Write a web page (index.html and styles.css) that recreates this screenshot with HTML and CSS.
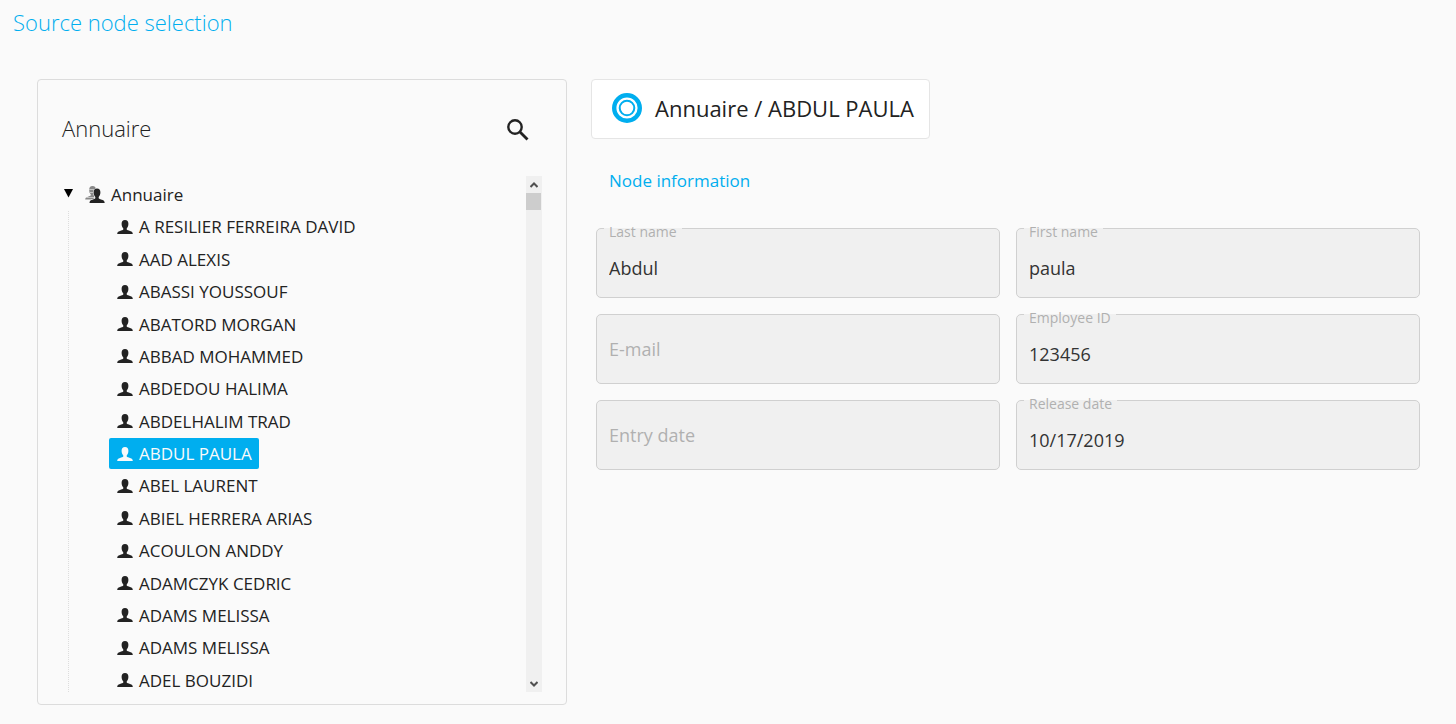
FILE: index.html
```html
<!DOCTYPE html>
<html lang="en">

<head>
    <meta charset="UTF-8">
    <meta name="viewport" content="width=device-width, initial-scale=1">
    <title>Source node selection</title>
    <link rel="stylesheet" href="styles.css">
</head>

<body>
    <!--Shared icons-->
    <svg class="sprite" aria-hidden="true">
        <symbol id="user" viewBox="0 0 16 14">
            <path d="M8 0C10.300 0 11.400 1.500 11.400 3.800C11.400 5.900 10.700 7.400 9.700 8.400V9.500C10.200 10.300 11.500 10.500 13 10.900C15 11.400 15.700 12.200 15.800 14H.2C.3 12.200 1 11.400 3 10.900C4.500 10.500 5.800 10.300 6.300 9.500V8.400C5.300 7.400 4.600 5.900 4.600 3.800C4.600 1.500 5.700 0 8 0Z"/>
        </symbol>
    </svg>

    <h1 class="page_title">Source node selection</h1>

    <main class="layout">
        <section class="panel">
            <div class="panel_header">
                <h2>Annuaire</h2>
                <button type="button" class="btn_search" aria-label="Search">
                    <svg width="22" height="22" viewBox="0 0 22 22">
                        <circle cx="8" cy="8" r="6.700" fill="none" stroke="currentColor" stroke-width="2.400"/>
                        <path d="M12.500 12.500L20.500 20.500" stroke="currentColor" stroke-width="2.800"/>
                    </svg>
                </button>
            </div>

            <div class="tree_box">
                <div class="tree">
                    <div class="root">
                        <button type="button" class="toggle" aria-label="Collapse">
                            <svg width="9" height="10" viewBox="0 0 9 10"><path d="M0 1H9L4.500 9.500Z"/></svg>
                        </button>
                        <button type="button" class="node">
                            <svg width="20" height="17" viewBox="0 0 20 17">
                                <path d="M7.500 0C9.800 0 11 1.500 11 3.800C11 5.900 10.200 7.400 9.200 8.400V13.500H.2C.3 12 1 11.200 3 10.700C4.500 10.300 5.300 10 5.800 9.300V8.400C4.800 7.400 4.200 5.900 4.200 3.800C4.200 1.500 5.200 0 7.500 0Z" fill="#888"/>
                                <path d="M4 3.500H11M4 6.500H11M1 11.500H9" stroke="#c4c4c4"/>
                                <path d="M12 2.500C14.300 2.500 15.400 4 15.400 6.300C15.400 8.400 14.700 10 13.700 11V12.200C14.200 13 15.500 13.200 17 13.700C18.700 14.200 19.500 15 19.700 17H4.500C4.600 15 5.400 14.200 7 13.700C8.500 13.200 9.800 13 10.300 12.200V11C9.300 10 8.600 8.400 8.600 6.300C8.600 4 9.700 2.500 12 2.500Z" fill="#222" stroke="#fafafa" stroke-width="1" paint-order="stroke"/>
                            </svg>
                            Annuaire
                        </button>
                    </div>
                    <ul class="children">
                        <li><button type="button" class="node"><svg class="icon"><use href="#user"/></svg>A RESILIER FERREIRA DAVID</button></li>
                        <li><button type="button" class="node"><svg class="icon"><use href="#user"/></svg>AAD ALEXIS</button></li>
                        <li><button type="button" class="node"><svg class="icon"><use href="#user"/></svg>ABASSI YOUSSOUF</button></li>
                        <li><button type="button" class="node"><svg class="icon"><use href="#user"/></svg>ABATORD MORGAN</button></li>
                        <li><button type="button" class="node"><svg class="icon"><use href="#user"/></svg>ABBAD MOHAMMED</button></li>
                        <li><button type="button" class="node"><svg class="icon"><use href="#user"/></svg>ABDEDOU HALIMA</button></li>
                        <li><button type="button" class="node"><svg class="icon"><use href="#user"/></svg>ABDELHALIM TRAD</button></li>
                        <li><button type="button" class="node selected"><svg class="icon"><use href="#user"/></svg>ABDUL PAULA</button></li>
                        <li><button type="button" class="node"><svg class="icon"><use href="#user"/></svg>ABEL LAURENT</button></li>
                        <li><button type="button" class="node"><svg class="icon"><use href="#user"/></svg>ABIEL HERRERA ARIAS</button></li>
                        <li><button type="button" class="node"><svg class="icon"><use href="#user"/></svg>ACOULON ANDDY</button></li>
                        <li><button type="button" class="node"><svg class="icon"><use href="#user"/></svg>ADAMCZYK CEDRIC</button></li>
                        <li><button type="button" class="node"><svg class="icon"><use href="#user"/></svg>ADAMS MELISSA</button></li>
                        <li><button type="button" class="node"><svg class="icon"><use href="#user"/></svg>ADAMS MELISSA</button></li>
                        <li><button type="button" class="node"><svg class="icon"><use href="#user"/></svg>ADEL BOUZIDI</button></li>
                    </ul>
                </div>

                <div class="scrollbar">
                    <button type="button" class="scroll_btn" aria-label="Scroll up">
                        <svg width="8" height="6" viewBox="0 0 8 6"><path d="M.5 5L4 1.500L7.500 5"/></svg>
                    </button>
                    <div class="thumb"></div>
                    <button type="button" class="scroll_btn scroll_down" aria-label="Scroll down">
                        <svg width="8" height="6" viewBox="0 0 8 6"><path d="M.5 1L4 4.500L7.500 1"/></svg>
                    </button>
                </div>
            </div>
        </section>

        <section class="details">
            <div class="node_card">
                <svg width="30" height="30" viewBox="0 0 30 30">
                    <g fill="none" stroke="#00aeef">
                        <circle cx="15" cy="15" r="12.800" stroke-width="4.400"/>
                        <circle cx="15" cy="15" r="7.300" stroke-width="2"/>
                    </g>
                </svg>
                <h2>Annuaire / ABDUL PAULA</h2>
            </div>

            <h3>Node information</h3>

            <form class="fields">
                <div class="field filled">
                    <input type="text" id="last_name" value="Abdul" readonly>
                    <label for="last_name">Last name</label>
                </div>
                <div class="field filled">
                    <input type="text" id="first_name" value="paula" readonly>
                    <label for="first_name">First name</label>
                </div>
                <div class="field">
                    <input type="text" id="email" readonly>
                    <label for="email">E-mail</label>
                </div>
                <div class="field filled">
                    <input type="text" id="employee_id" value="123456" readonly>
                    <label for="employee_id">Employee ID</label>
                </div>
                <div class="field">
                    <input type="text" id="entry_date" readonly>
                    <label for="entry_date">Entry date</label>
                </div>
                <div class="field filled">
                    <input type="text" id="release_date" value="10/17/2019" readonly>
                    <label for="release_date">Release date</label>
                </div>
            </form>
        </section>
    </main>
</body>

</html>
```
FILE: styles.css
```css
* {
    margin: 0;
    padding: 0;
    box-sizing: border-box;
}

body {
    display: flex;
    flex-direction: column;
    min-height: 100vh;
    background-color: #fafafa;
    color: #222;
    font-family: "Open Sans", "Noto Sans", sans-serif;
    font-size: 17px;
}

button {
    border: none;
    background: none;
    color: inherit;
    font: inherit;
    cursor: pointer;
}

.sprite {
    position: absolute;
    width: 0;
    height: 0;
}

.page_title {
    padding: 7px 13px 0;
    color: #00aeef;
    font-size: 22px;
    font-weight: 300;
    line-height: 30px;
}

.layout {
    flex: 1;
    display: grid;
    grid-template-columns: 530fr 829fr;
    gap: 24px;
    padding: 42px 36px 19px 37px;
}

/*Left panel with the tree*/
.panel {
    display: flex;
    flex-direction: column;
    padding: 33px 24px 7px;
    border: 1px solid #dcdcdc;
    border-radius: 4px;
}

.panel_header {
    display: flex;
    justify-content: space-between;
    align-items: flex-start;
    margin-bottom: 33px;
    padding-right: 13px;
}

.panel_header h2 {
    font-size: 22px;
    font-weight: 300;
    line-height: 30px;
}

.btn_search {
    display: flex;
    padding-top: 6px;
}

.tree_box {
    flex: 1;
    display: flex;
}

.tree {
    flex: 1;
    display: flex;
    flex-direction: column;
    padding-top: 3px;
}

.root {
    flex: 1;
    display: flex;
    align-items: flex-start;
}

.toggle {
    display: flex;
    padding: 9px 4px 8px 2px;
}

/*15 children, same height as the root row*/
.children {
    flex: 15;
    display: flex;
    flex-direction: column;
    position: relative;
    padding-left: 47px;
    list-style: none;
}

.children::before {
    content: "";
    position: absolute;
    top: 0;
    bottom: 5px;
    left: 6px;
    border-left: 1px dotted #ddd;
}

.children li {
    flex: 1;
}

.node {
    display: flex;
    align-items: center;
    gap: 6px;
    height: 31px;
    padding: 0 7px 0 8px;
    border-radius: 2px;
    white-space: nowrap;
}

.icon {
    width: 16px;
    height: 14px;
    fill: currentColor;
}

.selected {
    background-color: #00aeef;
    color: #fafafa;
}

.scrollbar {
    display: flex;
    flex-direction: column;
    width: 16px;
    margin-bottom: 5px;
    background-color: #f0f0f0;
}

.scroll_btn {
    display: flex;
    justify-content: center;
    align-items: center;
    height: 17px;
}

.scroll_btn path {
    fill: none;
    stroke: #505050;
    stroke-width: 2;
}

.scroll_down {
    margin-top: auto;
}

.thumb {
    height: 17px;
    margin-right: 1px;
    background-color: #cdcdcd;
}

/*Right side*/
.details {
    display: flex;
    flex-direction: column;
    align-items: flex-start;
}

.node_card {
    display: flex;
    align-items: center;
    gap: 13px;
    height: 60px;
    padding: 0 15px 2px 20px;
    border: 1px solid #e5e5e5;
    border-radius: 4px;
    background-color: white;
}

.node_card h2 {
    font-size: 22px;
    font-weight: 400;
}

.details h3 {
    margin: 30px 18px 35px;
    color: #00aeef;
    font-size: 17px;
    font-weight: 400;
    line-height: 24px;
}

.fields {
    align-self: stretch;
    display: grid;
    grid-template-columns: 1fr 1fr;
    gap: 16px;
    padding-left: 5px;
}

.field {
    position: relative;
}

.field input {
    display: block;
    width: 100%;
    height: 70px;
    padding: 10px 12px 0;
    border: 1px solid #d0d0d0;
    border-radius: 5px;
    outline: none;
    background-color: #f0f0f0;
    color: #333;
    font: inherit;
    font-size: 18px;
}

/*Empty field: the label stands in the middle of the box*/
.field label {
    position: absolute;
    top: 23px;
    left: 8px;
    padding: 0 5px;
    background-color: #f0f0f0;
    color: #b0b0b0;
    font-size: 18px;
    line-height: 24px;
}

/*Filled field: small label over the top border*/
.filled label {
    top: 0;
    font-size: 14px;
    line-height: 8px;
}
```
